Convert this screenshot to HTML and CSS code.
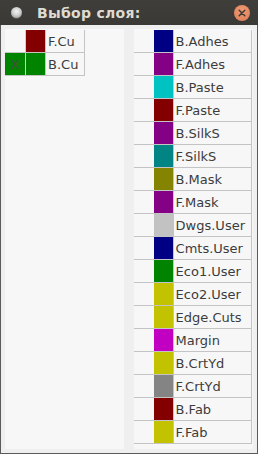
FILE: index.html
```html
<!DOCTYPE html>
<html lang="ru">
  <head>
    <meta charset="utf-8">
    <title>Выбор слоя</title>
    <link rel="stylesheet" href="styles.css">
  </head>
  <body>
    <div class="window">
      <div class="titlebar">
        <span class="menu-dot"></span>
        <span class="title">Выбор слоя:</span>
        <span class="close">
          <svg width="10" height="10" viewBox="0 0 10 10">
            <path d="M2.2 2.2 L7.8 7.8 M7.8 2.2 L2.2 7.8" stroke="#3c3b37" stroke-width="1.5" stroke-linecap="round"/>
          </svg>
        </span>
      </div>
      <div class="content">
        <div class="panel left">
          <table class="layers">
            <tr><td class="chk"></td><td class="sw" style="background:#840000"></td><td class="name">F.Cu</td></tr>
            <tr><td class="chk active">X</td><td class="sw" style="background:#008400"></td><td class="name">B.Cu</td></tr>
          </table>
        </div>
        <div class="panel right">
          <table class="layers wide">
            <tr><td class="chk"></td><td class="sw" style="background:#000084"></td><td class="name">B.Adhes</td></tr>
            <tr><td class="chk"></td><td class="sw" style="background:#840084"></td><td class="name">F.Adhes</td></tr>
            <tr><td class="chk"></td><td class="sw" style="background:#00c2c2"></td><td class="name">B.Paste</td></tr>
            <tr><td class="chk"></td><td class="sw" style="background:#840000"></td><td class="name">F.Paste</td></tr>
            <tr><td class="chk"></td><td class="sw" style="background:#840084"></td><td class="name">B.SilkS</td></tr>
            <tr><td class="chk"></td><td class="sw" style="background:#008484"></td><td class="name">F.SilkS</td></tr>
            <tr><td class="chk"></td><td class="sw" style="background:#848400"></td><td class="name">B.Mask</td></tr>
            <tr><td class="chk"></td><td class="sw" style="background:#840084"></td><td class="name">F.Mask</td></tr>
            <tr><td class="chk"></td><td class="sw" style="background:#c2c2c2"></td><td class="name">Dwgs.User</td></tr>
            <tr><td class="chk"></td><td class="sw" style="background:#000084"></td><td class="name">Cmts.User</td></tr>
            <tr><td class="chk"></td><td class="sw" style="background:#008400"></td><td class="name">Eco1.User</td></tr>
            <tr><td class="chk"></td><td class="sw" style="background:#c2c200"></td><td class="name">Eco2.User</td></tr>
            <tr><td class="chk"></td><td class="sw" style="background:#c2c200"></td><td class="name">Edge.Cuts</td></tr>
            <tr><td class="chk"></td><td class="sw" style="background:#c200c2"></td><td class="name">Margin</td></tr>
            <tr><td class="chk"></td><td class="sw" style="background:#c2c200"></td><td class="name">B.CrtYd</td></tr>
            <tr><td class="chk"></td><td class="sw" style="background:#848484"></td><td class="name">F.CrtYd</td></tr>
            <tr><td class="chk"></td><td class="sw" style="background:#840000"></td><td class="name">B.Fab</td></tr>
            <tr><td class="chk"></td><td class="sw" style="background:#c2c200"></td><td class="name">F.Fab</td></tr>
          </table>
        </div>
      </div>
    </div>
  </body>
</html>
```

FILE: styles.css
```css
html, body {
  margin: 0;
  padding: 0;
  background: #f0f0f0;
}

.window {
  width: 258px;
  height: 454px;
  box-sizing: border-box;
  border: 1px solid #5a5a58;
  border-top: none;
  background: #efefef;
  display: flex;
  flex-direction: column;
  font-family: "DejaVu Sans", sans-serif;
}

.titlebar {
  height: 25px;
  margin: 0 -1px;
  background: linear-gradient(#3f3e3a, #3a3935);
  display: flex;
  align-items: center;
  padding: 0 8px 0 11px;
  flex-shrink: 0;
}

.menu-dot {
  width: 11px;
  height: 11px;
  border-radius: 50%;
  background: radial-gradient(circle at 50% 40%, #f4f4f4 0, #d6d6d6 40%, #8a8a86 100%);
  box-shadow: 0 1px 0 #55544f;
}

.title {
  margin-left: 15px;
  color: #dfdbd2;
  font-weight: bold;
  font-size: 14px;
  letter-spacing: 0.3px;
  flex: 1;
}

.close {
  width: 16px;
  height: 16px;
  border-radius: 50%;
  background: radial-gradient(circle at 50% 35%, #f09a74, #dc7c55);
  display: flex;
  align-items: center;
  justify-content: center;
}

.content {
  flex: 1;
  display: flex;
  gap: 10px;
  padding: 4px;
}

.panel {
  background: #f7f7f7;
}

.panel.left {
  width: 119px;
}

.panel.right {
  flex: 1;
}

.layers {
  border-collapse: collapse;
  margin-top: 1px;
  font-size: 13px;
  color: #3c3c3c;
}

.layers td {
  height: 22px;
  padding: 0;
  border-bottom: 1px solid #c4c4c4;
}

.layers .chk {
  width: 20px;
  text-align: center;
  color: #4a4a4a;
}

.left .layers .chk {
  border-right: 1px solid #d0d0d0;
}

.layers .chk.active {
  background: #008400;
}

.layers .sw {
  width: 19px;
  border-right: 1px solid #c4c4c4;
}

.layers .name {
  padding: 0 6px 0 2px;
  border-right: 1px solid #c4c4c4;
}

.layers.wide {
  width: 118px;
}
```
